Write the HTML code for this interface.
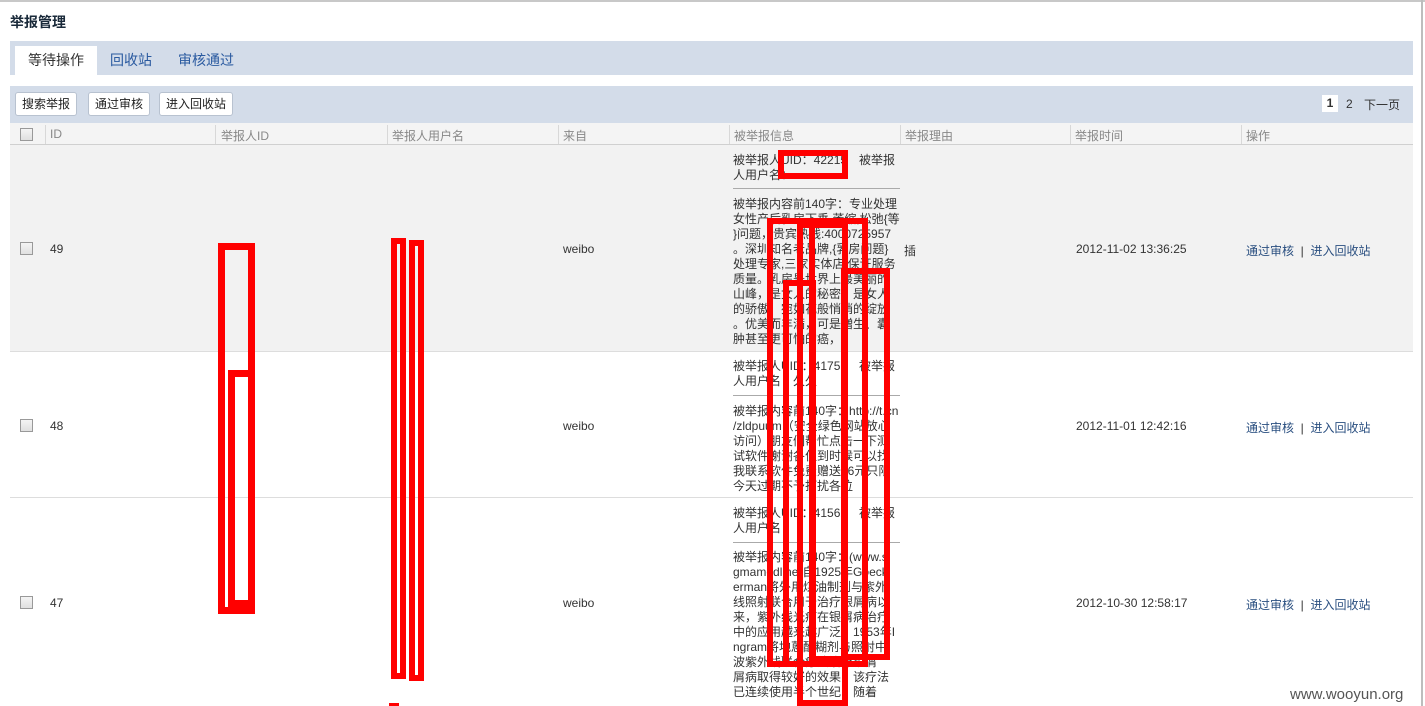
<!DOCTYPE html>
<html><head><meta charset="utf-8"><style>
*{margin:0;padding:0;box-sizing:border-box}
html,body{width:1425px;height:706px;overflow:hidden}
body{background:#fff;font-family:"Liberation Sans","Noto Sans CJK SC",sans-serif;font-size:12px;color:#333;position:relative}
.a{position:absolute}
.topline{left:0;top:0;width:1425px;height:2px;background:#c8c8c8}
.vline{left:1421px;top:0;width:2px;height:706px;background:#bdbdbd}
h1{position:absolute;left:10px;top:12px;font-size:14px;font-weight:bold;color:#1a2a3a}
.tabs{left:10px;top:41px;width:1403px;height:34px;background:#d3dce9}
.tab{position:absolute;top:5px;height:29px;line-height:29px;font-size:14px;color:#2a5aa0}
.tool{left:10px;top:86px;width:1403px;height:37px;background:#d3dce9}
.btn{position:absolute;top:92px;height:24px;line-height:22px;border:1px solid #b8c2d0;border-radius:3px;background:#fff;font-size:12px;color:#222;padding:0 6px}
.hdr{left:10px;top:123px;width:1403px;height:22px;background:#f4f4f4;border-bottom:1px solid #d0d0d0}
.hc{position:absolute;top:127px;color:#888;font-size:12px}
.sep{position:absolute;top:125px;width:1px;height:19px;background:#d8d8d8}
.cb{position:absolute;width:13px;height:13px;border:1px solid #999;background:linear-gradient(#f4f4f4,#e0e0e0)}
.row1{left:10px;top:145px;width:1403px;height:207px;background:#f2f2f2;border-bottom:1px solid #ddd}
.row2{left:10px;top:352px;width:1403px;height:146px;border-bottom:1px solid #ddd}
.t{position:absolute;font-size:12px;color:#333}
.lk{color:#2a4f80}
.info{position:absolute;left:733px;line-height:15px;font-size:12px;color:#333;white-space:nowrap}
.hr{position:absolute;left:733px;width:167px;height:1px;background:#aaa}
.r{position:absolute;border:6px solid #f00}
</style></head><body>
<div class="a topline"></div>
<div class="a vline"></div>
<h1>举报管理</h1>
<div class="a tabs"></div>
<div class="a" style="left:15px;top:46px;width:82px;height:29px;background:#fff"></div>
<div class="tab" style="left:28px;top:46px;color:#333">等待操作</div>
<div class="tab" style="left:110px;top:46px">回收站</div>
<div class="tab" style="left:178px;top:46px">审核通过</div>
<div class="a tool"></div>
<div class="btn" style="left:15px">搜索举报</div>
<div class="btn" style="left:88px">通过审核</div>
<div class="btn" style="left:159px">进入回收站</div>
<div class="a" style="left:1322px;top:95px;width:16px;height:17px;background:#fff;font-weight:bold;text-align:center;line-height:17px">1</div>
<div class="t" style="left:1346px;top:97px">2</div>
<div class="t" style="left:1364px;top:96px">下一页</div>
<div class="a hdr"></div>
<div class="cb" style="left:20px;top:128px"></div>
<div class="sep" style="left:45px"></div><div class="hc" style="left:50px">ID</div>
<div class="sep" style="left:215px"></div><div class="hc" style="left:221px">举报人ID</div>
<div class="sep" style="left:387px"></div><div class="hc" style="left:392px">举报人用户名</div>
<div class="sep" style="left:558px"></div><div class="hc" style="left:563px">来自</div>
<div class="sep" style="left:729px"></div><div class="hc" style="left:734px">被举报信息</div>
<div class="sep" style="left:900px"></div><div class="hc" style="left:905px">举报理由</div>
<div class="sep" style="left:1070px"></div><div class="hc" style="left:1075px">举报时间</div>
<div class="sep" style="left:1241px"></div><div class="hc" style="left:1246px">操作</div>
<div class="a row1"></div>
<div class="a row2"></div>

<div class="cb" style="left:20px;top:242px"></div>
<div class="t" style="left:50px;top:242px">49</div>
<div class="t" style="left:563px;top:242px">weibo</div>
<div class="t" style="left:904px;top:242px">插</div>
<div class="t" style="left:1076px;top:242px">2012-11-02 13:36:25</div>
<div class="t" style="left:1246px;top:242px"><span class="lk">通过审核</span> &nbsp;| &nbsp;<span class="lk">进入回收站</span></div>

<div class="cb" style="left:20px;top:419px"></div>
<div class="t" style="left:50px;top:419px">48</div>
<div class="t" style="left:563px;top:419px">weibo</div>
<div class="t" style="left:1076px;top:419px">2012-11-01 12:42:16</div>
<div class="t" style="left:1246px;top:419px"><span class="lk">通过审核</span> &nbsp;| &nbsp;<span class="lk">进入回收站</span></div>

<div class="cb" style="left:20px;top:596px"></div>
<div class="t" style="left:50px;top:596px">47</div>
<div class="t" style="left:563px;top:596px">weibo</div>
<div class="t" style="left:1076px;top:596px">2012-10-30 12:58:17</div>
<div class="t" style="left:1246px;top:596px"><span class="lk">通过审核</span> &nbsp;| &nbsp;<span class="lk">进入回收站</span></div>

<div class="info" style="top:153px">被举报人UID：42215　被举报<br>人用户名：</div>
<div class="hr" style="top:188px"></div>
<div class="info" style="top:197px">被举报内容前140字：专业处理<br>女性产后乳房下垂,萎缩,松弛{等<br>}问题，贵宾热线:4000725957<br>。深圳知名老品牌,{乳房问题}<br>处理专家,三家实体店,保证服务<br>质量。乳房是世界上最美丽的<br>山峰，是女人的秘密，是女人<br>的骄傲，宛如花般悄悄的绽放<br>。优美而丰满，可是増生、囊<br>肿甚至更可怕的癌，</div>
<div class="info" style="top:359px">被举报人UID：41757　被举报<br>人用户名：久久</div>
<div class="hr" style="top:395px"></div>
<div class="info" style="top:404px">被举报内容前140字：http://t.cn<br>/zldpuum（安全绿色网站放心<br>访问）朋友们帮忙点击一下测<br>试软件谢谢各位到时候可以找<br>我联系软件免费赠送66元只限<br>今天过期不予打扰各位</div>
<div class="info" style="top:506px">被举报人UID：41562　被举报<br>人用户名：</div>
<div class="hr" style="top:542px"></div>
<div class="info" style="top:550px">被举报内容前140字：(www.si<br>gmamedline)自1925年Goeck<br>erman将外用煤油制剂与紫外<br>线照射联合用于治疗银屑病以<br>来，紫外线光疗在银屑病治疗<br>中的应用越来越广泛。1953年I<br>ngram将地蒽酚糊剂与照射中<br>波紫外线联合疗法治疗银屑<br>屑病取得较好的效果，该疗法<br>已连续使用半个世纪，随着</div>

<div class="r" style="left:218px;top:243px;width:37px;height:371px;border-width:7px"></div>
<div class="r" style="left:228px;top:370px;width:27px;height:237px;border-width:7px"></div>
<div class="r" style="left:391px;top:238px;width:15px;height:441px;border-width:6px"></div>
<div class="r" style="left:409px;top:240px;width:15px;height:441px;border-width:6px"></div>
<div class="r" style="left:778px;top:150px;width:70px;height:29px"></div>
<div class="r" style="left:767px;top:218px;width:101px;height:449px"></div>
<div class="r" style="left:783px;top:280px;width:33px;height:387px"></div>
<div class="r" style="left:797px;top:222px;width:51px;height:484px"></div>
<div class="r" style="left:809px;top:222px;width:39px;height:440px"></div>
<div class="r" style="left:841px;top:268px;width:49px;height:392px"></div>
<div class="a" style="left:389px;top:703px;width:10px;height:3px;background:#f00"></div>
<div class="t" style="left:1290px;top:686px;font-size:15px;color:#555">www.wooyun.org</div>
</body></html>
